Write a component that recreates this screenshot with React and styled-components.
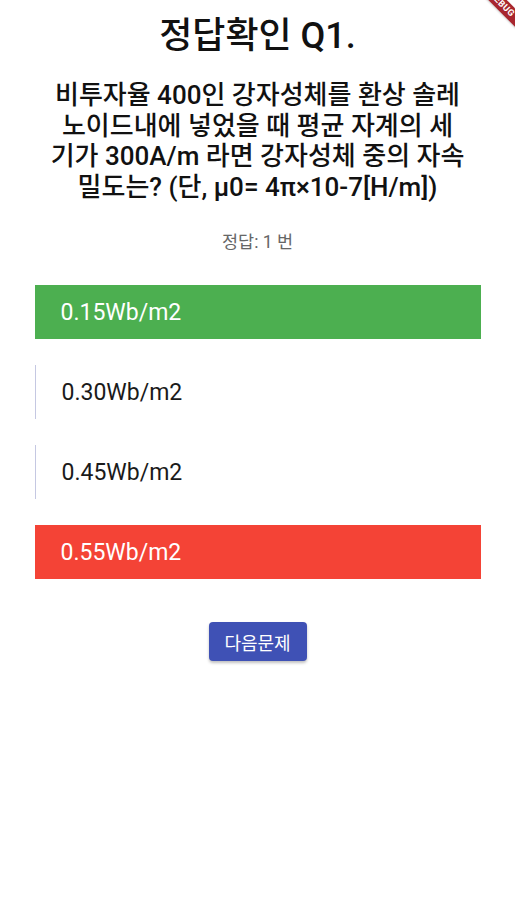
import React from "react";
import styled, { createGlobalStyle } from "styled-components";

const Global = createGlobalStyle`
  html, body { margin: 0; padding: 0; background: #fff; }
  body { font-family: Roboto, "Noto Sans CJK KR", sans-serif; overflow: hidden; }
`;

const Page = styled.div`
  position: relative;
  width: 515px;
  height: 900px;
  overflow: hidden;
  display: flex;
  flex-direction: column;
  align-items: center;
`;

const Title = styled.h1`
  margin: 14px 0 0;
  font-size: 36px;
  line-height: 44px;
  font-weight: 500;
  color: #111;
  text-align: center;
`;

const Question = styled.p`
  margin: 22px 0 0;
  display: flex;
  flex-direction: column;
  align-items: center;
  font-size: 26px;
  line-height: 30.5px;
  font-weight: 500;
  color: #111;
  text-align: center;
`;

const QuestionLine = styled.span`
  white-space: nowrap;
`;

const AnswerLabel = styled.div`
  margin-top: 29px;
  font-size: 17.5px;
  line-height: 22px;
  color: #666;
`;

const Options = styled.div`
  margin-top: 32px;
  width: 446px;
  display: flex;
  flex-direction: column;
  gap: 26px;
`;

const Option = styled.div`
  height: 54px;
  display: flex;
  align-items: center;
  padding-left: 26px;
  box-sizing: border-box;
  font-size: 23px;
  color: ${(p) => (p.$bg ? "#fff" : "#1a1a1a")};
  background: ${(p) => p.$bg || "transparent"};
  border-left: ${(p) => (p.$bg ? "none" : "1.5px solid #c5c8e2")};
`;

const NextButton = styled.button`
  margin-top: 43px;
  width: 98px;
  height: 39px;
  padding: 0;
  border: none;
  border-radius: 4px;
  background: #3f51b5;
  color: #fff;
  font-family: Roboto, "Noto Sans CJK KR", sans-serif;
  font-size: 18px;
  box-shadow: 0 2px 3px rgba(0, 0, 0, 0.25);
`;

const Banner = styled.div`
  position: absolute;
  left: 442px;
  top: -2px;
  width: 120px;
  height: 13px;
  background: #a8262e;
  color: #fff;
  font-size: 9px;
  font-weight: 700;
  line-height: 13px;
  text-align: center;
  letter-spacing: 0.5px;
  transform: rotate(45deg);
  box-shadow: 0 1px 2px rgba(0, 0, 0, 0.2);
`;

const questionLines = [
  "비투자율 400인 강자성체를 환상 솔레",
  "노이드내에 넣었을 때 평균 자계의 세",
  "기가 300A/m 라면 강자성체 중의 자속",
  "밀도는? (단, μ0= 4π×10-7[H/m])",
];

const options = [
  { text: "0.15Wb/m2", bg: "#4caf50" },
  { text: "0.30Wb/m2" },
  { text: "0.45Wb/m2" },
  { text: "0.55Wb/m2", bg: "#f44336" },
];

export default function App() {
  return (
    <Page>
      <Global />
      <Title>정답확인 Q1.</Title>
      <Question>
        {questionLines.map((l) => (
          <QuestionLine key={l}>{l}</QuestionLine>
        ))}
      </Question>
      <AnswerLabel>정답: 1 번</AnswerLabel>
      <Options>
        {options.map((o) => (
          <Option key={o.text} $bg={o.bg}>
            {o.text}
          </Option>
        ))}
      </Options>
      <NextButton>다음문제</NextButton>
      <Banner>DEBUG</Banner>
    </Page>
  );
}
